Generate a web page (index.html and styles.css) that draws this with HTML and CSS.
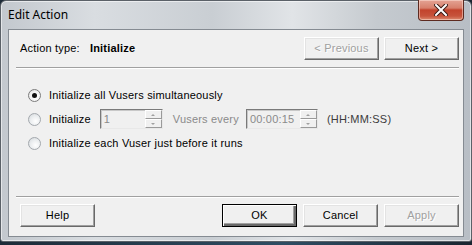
FILE: index.html
```html
<!DOCTYPE html>
<html>
  <head>
    <meta name="viewport" content="width=device-width, initial-scale=1.0" />
    <link rel="stylesheet" href="styles.css">
  </head>
  <body>
    <div class="window">
      <div class="titlebar">
        <span class="title">Edit Action</span>
        <div class="close-btn">
          <svg width="14" height="12" viewBox="0 0 14 12">
            <path d="M2 1 L12 11 M12 1 L2 11" stroke="#3a1a14" stroke-width="4" stroke-linecap="square" />
            <path d="M2 1 L12 11 M12 1 L2 11" stroke="#fff" stroke-width="2" stroke-linecap="square" />
          </svg>
        </div>
      </div>

      <div class="client">
        <div class="header">
          <span class="label">Action type:</span>
          <span class="action-name">Initialize</span>
          <div class="nav">
            <div class="btn disabled">&lt; Previous</div>
            <div class="btn">Next &gt;</div>
          </div>
        </div>

        <div class="sep"></div>

        <div class="options">
          <div class="row">
            <span class="radio checked"></span>
            <span>Initialize all Vusers simultaneously</span>
          </div>
          <div class="row">
            <span class="radio"></span>
            <span>Initialize</span>
            <div class="spin spin-count">
              <span class="spin-value">1</span>
              <div class="spin-arrows">
                <span class="arrow up"></span>
                <span class="arrow down"></span>
              </div>
            </div>
            <span class="muted">Vusers every</span>
            <div class="spin spin-time">
              <span class="spin-value">00:00:15</span>
              <div class="spin-arrows">
                <span class="arrow up"></span>
                <span class="arrow down"></span>
              </div>
            </div>
            <span class="hint">(HH:MM:SS)</span>
          </div>
          <div class="row">
            <span class="radio"></span>
            <span>Initialize each Vuser just before it runs</span>
          </div>
        </div>

        <div class="sep"></div>

        <div class="footer">
          <div class="btn">Help</div>
          <div class="btn default push">OK</div>
          <div class="btn">Cancel</div>
          <div class="btn disabled">Apply</div>
        </div>
      </div>
    </div>
  </body>
</html>
```

FILE: styles.css
```css
* {
  box-sizing: border-box;
  margin: 0;
  padding: 0;
}

body {
  width: 472px;
  height: 245px;
  overflow: hidden;
  background: linear-gradient(90deg, #1d2b38, #2f4d63 60%, #1a2530);
  font-family: "Liberation Sans", Arial, sans-serif;
  font-size: 11px;
  letter-spacing: 0.2px;
  color: #000;
}

.window {
  width: 472px;
  height: 242px;
  display: flex;
  flex-direction: column;
  border: 1px solid #5b6168;
  border-radius: 6px 6px 3px 3px;
  background: linear-gradient(90deg, #c3c8ce 0%, #d9dde1 20%, #c9ced3 45%, #e1e4e7 62%, #c5cacf 80%, #b8bec5 100%);
  box-shadow: inset 0 0 0 1px rgba(255, 255, 255, 0.55);
}

.titlebar {
  height: 28px;
  display: flex;
  align-items: flex-start;
  padding-left: 7px;
}

.title {
  font-family: "Noto Sans", "Open Sans", sans-serif;
  font-size: 12px;
  letter-spacing: 0;
  line-height: 28px;
  color: #000;
}

.close-btn {
  margin-left: auto;
  margin-right: 7px;
  margin-top: -1px;
  width: 46px;
  height: 21px;
  display: flex;
  align-items: center;
  justify-content: center;
  border: 1px solid #5d2a20;
  border-top: none;
  border-radius: 0 0 4px 4px;
  background: linear-gradient(#e4a394 0%, #d7806c 40%, #c2432c 50%, #c7533b 80%, #dc8b70 100%);
  box-shadow: inset 0 0 0 1px rgba(255, 230, 220, 0.5);
}

.client {
  flex: 1;
  margin: 0 7px 4px 7px;
  display: flex;
  flex-direction: column;
  background: #f0f0f0;
  border: 1px solid #858b92;
}

.header {
  height: 37px;
  display: flex;
  align-items: flex-start;
  padding: 7px 4px 0 11px;
}

.label,
.action-name {
  line-height: 23px;
}

.action-name {
  font-weight: bold;
  margin-left: 10px;
}

.nav {
  margin-left: auto;
  display: flex;
  gap: 5px;
}

.btn {
  width: 75px;
  height: 23px;
  line-height: 21px;
  text-align: center;
  background: #f0f0f0;
  border: 1px solid;
  border-color: #fff #696969 #696969 #fff;
  box-shadow: inset -1px -1px 0 #a0a0a0, inset 1px 1px 0 #e3e3e3;
}

.btn.disabled {
  color: #a0a0a0;
  text-shadow: 1px 1px 0 #fff;
}

.btn.default {
  border: 1px solid #000;
  box-shadow: inset 1px 1px 0 #fff, inset -2px -2px 0 #696969, inset -3px -3px 0 #a0a0a0;
}

.sep {
  height: 2px;
  margin: 0 4px 0 7px;
  border-top: 1px solid #a0a0a0;
  border-bottom: 1px solid #fff;
}

.options {
  height: 127px;
  display: flex;
  flex-direction: column;
  gap: 2px;
  padding: 15px 0 0 19px;
}

.row {
  height: 22px;
  display: flex;
  align-items: center;
}

.radio {
  width: 13px;
  height: 13px;
  margin-right: 8px;
  border-radius: 50%;
  border: 1px solid #a3a8ad;
  background: radial-gradient(circle at 60% 65%, #ffffff 0%, #e9ecee 55%, #cfd3d7 100%);
  display: flex;
  align-items: center;
  justify-content: center;
}

.radio.checked {
  border-color: #7c7c7c;
  background: radial-gradient(circle at 60% 65%, #ffffff 0%, #f2f2f2 60%, #d2d2d2 100%);
}

.radio.checked::after {
  content: "";
  width: 5px;
  height: 5px;
  border-radius: 50%;
  background: #111;
}

.spin {
  height: 20px;
  display: flex;
  border: 1px solid;
  border-color: #7a7a7a #e8e8e8 #e8e8e8 #7a7a7a;
  box-shadow: inset 1px 1px 0 #c8c8c8;
  background: #f0f0f0;
  color: #8a8a8a;
}

.spin-count {
  width: 63px;
  margin: 0 10px 0 9px;
}

.spin-time {
  width: 72px;
  margin: 0 9px 0 7px;
}

.spin-value {
  flex: 1;
  padding-left: 3px;
  line-height: 18px;
}

.spin-arrows {
  width: 17px;
  display: flex;
  flex-direction: column;
}

.arrow {
  flex: 1;
  display: flex;
  align-items: center;
  justify-content: center;
  border: 1px solid;
  border-color: #fff #9a9a9a #9a9a9a #fff;
}

.arrow::after {
  content: "";
  border-left: 2px solid transparent;
  border-right: 2px solid transparent;
}

.arrow.up::after {
  border-bottom: 2px solid #a0a0a0;
}

.arrow.down::after {
  border-top: 2px solid #a0a0a0;
}

.muted {
  color: #8a8a8a;
}

.hint {
  color: #3c3c3c;
}

.footer {
  flex: 1;
  display: flex;
  align-items: flex-start;
  gap: 6px;
  padding: 6px 4px 0 11px;
}

.push {
  margin-left: auto;
}
```
